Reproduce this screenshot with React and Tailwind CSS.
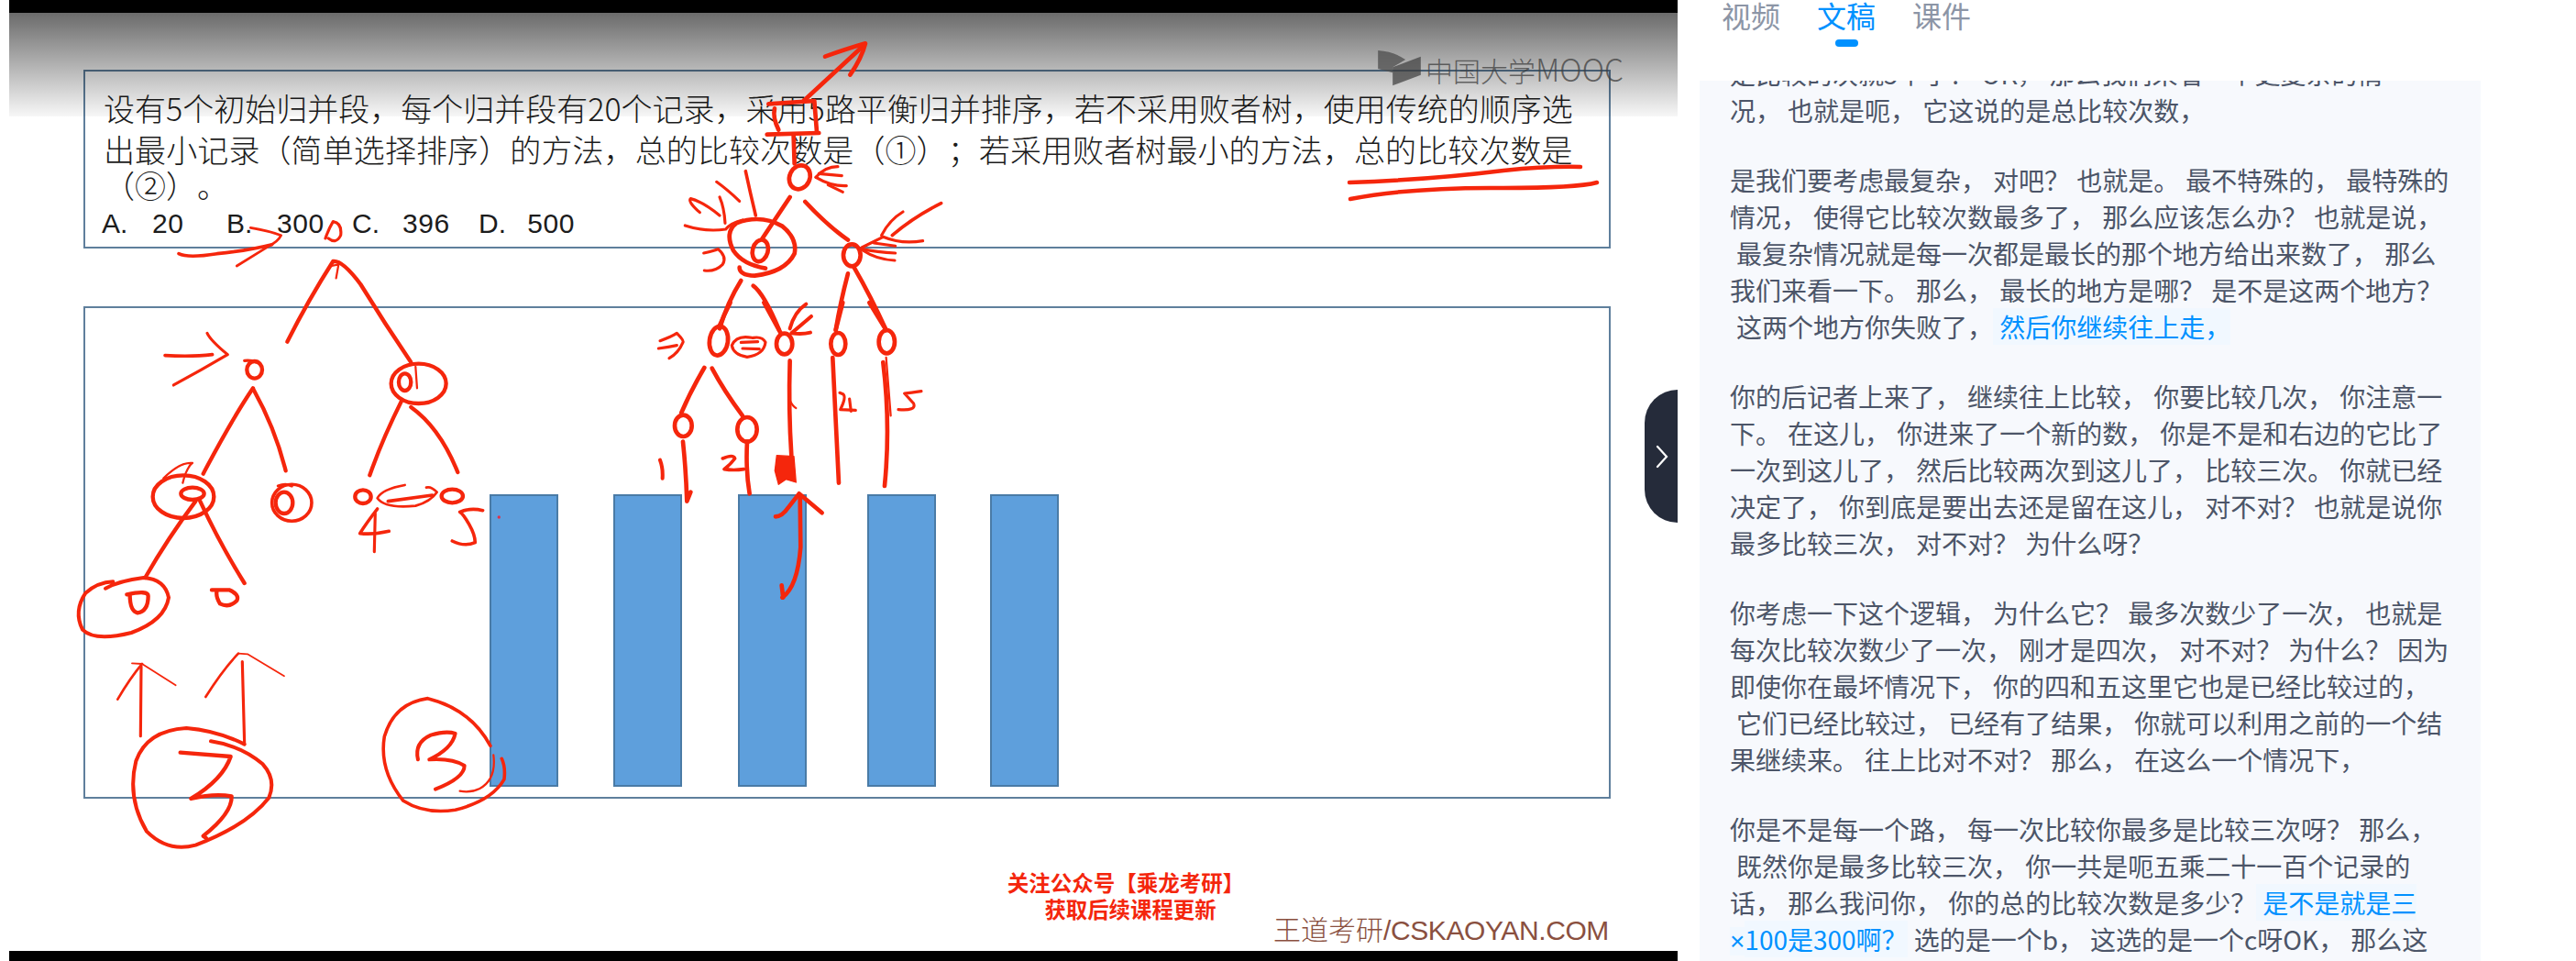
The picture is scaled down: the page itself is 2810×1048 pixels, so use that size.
import React from "react";

const CJK = { fontFamily: '"Noto Sans CJK SC", "Liberation Sans", sans-serif' };

function Ink() {
  const P = ({ d, w }) => <path d={d} strokeWidth={w ? w * 1.35 : undefined} />;
  const E = ({ c, r, a = 0, w }) => (
    <ellipse cx={c[0]} cy={c[1]} rx={r[0]} ry={r[1]} strokeWidth={w ? w * 1.35 : undefined} transform={a ? `rotate(${a} ${c[0]} ${c[1]})` : undefined} />
  );
  return (
    <svg className="absolute top-0 left-0 w-[1830px] h-[1048px]" viewBox="0 0 1830 1048" fill="none" stroke="#f5260c" strokeLinecap="round" strokeLinejoin="round">
      <path d="M1472 199 Q1560 196 1640 186 Q1690 181 1724 182" strokeWidth="4.5" />
      <path d="M1473 217 Q1540 204 1640 205 Q1720 205 1742 199" strokeWidth="4.5" />

      <g transform="translate(690 30) scale(0.3333)" strokeWidth="14">
        <P d="M560 240 L755 60" />
        <P d="M630 95 Q700 70 762 52 Q750 100 712 155" />
        <P d="M445 250 L595 240 L603 340" />
        <P d="M440 350 L610 345" />
        <P d="M465 265 Q458 295 478 335" />
        <P d="M527 355 L530 445" />
        <E c={[547, 490]} r={[33, 40]} a={25} />
        <P d="M600 490 Q630 455 672 455" w="7" />
        <P d="M610 478 L685 485" w="7" />
        <P d="M600 490 Q650 520 700 518" w="7" />
        <P d="M640 515 L688 538" w="7" />
        <P d="M515 555 L425 690" />
        <P d="M565 570 Q640 650 705 695" />
        <P d="M435 788 Q360 775 330 730 Q300 670 340 640 Q420 610 490 650 Q540 690 530 740 Q500 800 400 812 Q350 810 350 785" />
        <E c={[418, 730]} r={[25, 36]} a={15} />
        <P d="M370 470 Q385 540 403 615" w="8" />
        <P d="M275 505 Q310 530 350 568" w="7" />
        <P d="M285 555 Q300 590 303 640" w="7" />
        <P d="M220 605 Q180 570 190 560 Q230 570 285 615" w="7" />
        <P d="M172 648 Q240 670 305 660 Q320 640 360 630" w="7" />
        <P d="M233 738 Q270 730 280 725 Q310 750 295 775 Q270 800 235 795" w="7" />
        <E c={[718, 745]} r={[28, 36]} />
        <P d="M1010 575 Q920 620 850 680" w="8" />
        <P d="M885 603 Q840 630 815 680" w="7" />
        <P d="M750 720 L820 685 Q880 710 950 698" w="7" />
        <P d="M790 705 L860 715" w="7" />
        <P d="M750 725 Q800 735 860 738" w="7" />
        <P d="M755 730 Q800 760 858 762" w="7" />
        <P d="M355 828 Q310 900 285 985" />
        <P d="M395 845 Q430 870 480 990" />
        <P d="M705 805 Q680 900 665 990" />
        <P d="M725 785 Q780 880 830 990" />
      </g>

      <g transform="translate(690 330) scale(0.3333)" strokeWidth="14">
        <P d="M320 0 Q300 40 285 75" />
        <P d="M430 0 L485 100" />
        <P d="M688 0 L665 90" />
        <P d="M775 0 L830 90" />
        <E c={[282, 125]} r={[30, 48]} a={8} />
        <E c={[497, 135]} r={[26, 34]} />
        <E c={[673, 135]} r={[24, 36]} />
        <E c={[832, 128]} r={[26, 38]} />
        <P d="M568 5 Q530 30 515 85" w="9" />
        <P d="M585 45 Q550 75 520 100 Q555 105 582 98" w="9" />
        <P d="M90 125 Q130 110 145 100 Q170 125 165 130 Q150 165 120 182" w="7" />
        <P d="M85 150 Q120 145 145 140" w="7" />
        <P d="M390 115 Q340 105 325 140 Q330 170 375 178 Q430 170 435 130 Q425 110 395 115" w="7" />
        <P d="M355 130 L410 128" w="7" />
        <P d="M360 150 L415 152" w="7" />
        <P d="M235 213 Q190 290 160 360" />
        <P d="M260 215 Q300 290 360 370" />
        <E c={[166, 403]} r={[28, 35]} />
        <E c={[375, 415]} r={[32, 40]} />
        <P d="M165 455 Q175 550 178 650 L190 620" />
        <P d="M375 455 Q370 550 383 625" />
        <P d="M515 190 Q510 350 520 500" />
        <P d="M515 320 Q525 340 535 345" w="5" />
        <P d="M655 180 Q665 400 675 590" />
        <P d="M820 195 Q845 400 825 600" />
        <P d="M830 180 L845 370" w="5" />
        <P d="M90 515 Q100 540 98 575" w="9" />
        <P d="M295 510 Q330 495 335 510 Q320 530 300 545 Q330 550 365 545" w="8" />
        <path d="M472 500 L528 503 L535 588 L502 578 L478 595 L466 550 Z" fill="#f5260c" strokeWidth="4" />
        <P d="M678 295 L690 300 Q700 310 680 350 L730 352" w="7" />
        <P d="M710 315 L715 355" w="7" />
        <P d="M945 290 Q910 295 890 297 L920 330 Q930 355 870 350" w="7" />
        <P d="M490 965 Q540 930 550 800 L548 630" />
        <P d="M488 925 L493 965" />
        <P d="M468 700 Q490 700 510 670 L545 625 L620 688" />
      </g>

      <g transform="translate(160 240) scale(0.3333)" strokeWidth="13">
        <P d="M105 110 Q135 125 230 110 Q330 100 410 80" w="8" />
        <P d="M340 25 Q400 35 440 50 Q430 70 400 85 L295 150" w="6" />
        <P d="M585 60 Q595 30 610 5 Q640 10 635 50 Q620 80 595 60" w="7" />
        <P d="M460 398 Q530 260 610 135 Q640 130 700 210 Q780 340 865 465" />
        <P d="M605 150 L628 145 L620 190" w="5" />
        <P d="M60 443 Q150 448 215 440" w="8" />
        <P d="M198 370 Q210 395 265 440 Q180 490 88 540" w="7" />
        <E c={[353, 490]} r={[25, 28]} />
        <P d="M320 460 Q345 458 360 465" w="7" />
        <P d="M348 550 Q280 650 185 830" />
        <P d="M350 555 Q420 680 455 820" />
        <E c={[890, 535]} r={[90, 65]} />
        <E c={[845, 530]} r={[20, 28]} />
        <P d="M880 480 L885 550" w="5" />
        <P d="M835 590 Q770 720 730 835" />
        <P d="M865 612 Q960 680 1018 825" />
        <E c={[120, 905]} r={[100, 70]} />
        <P d="M55 845 Q110 790 150 795 Q130 810 118 860" w="5" />
        <E c={[150, 895]} r={[38, 20]} />
        <E c={[475, 925]} r={[65, 60]} w="8" />
        <E c={[450, 925]} r={[28, 35]} />
        <P d="M430 870 Q455 860 475 870" w="7" />
        <E c={[708, 905]} r={[26, 22]} />
        <P d="M845 867 Q770 880 755 910 Q780 945 880 935 Q930 920 950 890 Q930 870 915 875" w="6" />
        <P d="M790 920 L935 900" w="8" />
        <E c={[1000, 903]} r={[35, 22]} />
      </g>

      <g transform="translate(70 540) scale(0.3333)" strokeWidth="13">
        <P d="M430 20 Q340 140 265 270" />
        <P d="M445 20 Q510 160 590 288" />
        <P d="M1025 45 Q990 90 968 125 Q1010 130 1063 118" w="8" />
        <P d="M1018 60 L1015 185" w="7" />
        <P d="M1370 50 Q1330 40 1295 55 Q1305 60 1325 95 Q1345 130 1345 155 Q1310 170 1270 150" w="8" />
        <circle cx="1423" cy="72" r="5" fill="#e0304a" stroke="none" />
        <P d="M135 305 Q180 280 260 270 Q330 275 342 335 Q330 410 220 450 Q100 480 60 440 Q30 380 70 320 Q110 285 160 283" w="9" />
        <P d="M205 325 Q275 310 275 330 Q275 380 240 385 Q215 380 215 325" />
        <P d="M483 310 L540 310 Q575 325 565 345 Q540 370 510 355 Q495 330 500 312" />
        <P d="M250 788 L252 560" w="7" />
        <P d="M175 668 Q215 600 255 552" w="6" />
        <P d="M222 550 L255 552 L365 622" w="4" />
        <P d="M590 810 L583 545" w="7" />
        <P d="M463 660 Q520 570 570 518" w="6" />
        <P d="M570 518 L600 520 L720 592" w="4" />
        <P d="M590 815 Q500 770 400 762 Q270 770 235 870 Q205 990 270 1100 Q340 1170 430 1145 Q600 1080 670 990 Q695 930 650 880 Q580 820 480 805" w="9" />
        <P d="M380 842 Q480 850 545 855 Q520 930 415 993 Q490 975 548 985 Q550 1040 455 1115 L465 1122" />
        <P d="M1395 820 Q1330 700 1190 665 Q1080 680 1048 790 Q1030 900 1110 1000 Q1180 1045 1280 1030 Q1400 1000 1440 930 Q1445 890 1432 862" w="8" />
        <P d="M1405 850 Q1415 930 1360 960 Q1330 975 1295 968" w="5" />
        <P d="M1158 865 Q1145 810 1200 785 Q1250 770 1280 780 Q1270 830 1195 865 Q1270 860 1310 885 Q1310 925 1215 962" w="9" />
      </g>
    </svg>
  );
}

function Logo() {
  return (
    <div className="absolute left-[1503px] top-[44px] flex items-center h-[60px]">
      <svg className="w-[47px] h-[39px] shrink-0" viewBox="40 55 140 117">
        <path d="M40 55 Q90 58 130 85 L88 110 L88 128 L40 115 Z" fill="#4c4c4c" fillOpacity="0.75" />
        <path d="M88 110 L180 75 L180 135 L88 170 Z" fill="#3c3c3c" fillOpacity="0.7" />
      </svg>
      <span className="ml-[5px] mt-[2px] text-[30px] leading-[36px] font-light text-[#3f3f3f]/75 whitespace-pre" style={CJK}>
        中国大学<span className="text-[33.5px]">MOOC</span>
      </span>
    </div>
  );
}

function Slide() {
  const line = "h-[44px] leading-[44px] text-[34px] whitespace-pre font-light text-[#1c1c1c] [text-spacing-trim:space-all]";
  const opts = [["A.", "20", "w-[136px]"], ["B.", "300", "w-[137px]"], ["C.", "396", "w-[138px]"], ["D.", "500", "w-[105px]"]];
  return (
    <div className="flex flex-col flex-1 relative bg-white" style={CJK}>
      <div className="ml-[81px] mt-[62px] w-[1666px] h-[195px] border-2 border-[#5f7f9c] pl-[20px] pt-[18px] flex flex-col">
        <div className={line}>设有5个初始归并段，每个归并段有20个记录，采用5路平衡归并排序，若不采用败者树，使用传统的顺序选</div>
        <div className={`${line} mt-[1px] tracking-[0.1px]`}>出最小记录（简单选择排序）的方法，总的比较次数是（①）；若采用败者树最小的方法，总的比较次数是</div>
        <div className={`${line} !h-[34px] !leading-[34px]`}>（②）。</div>
        <div className="flex mt-[2px] h-[44px] items-center -ml-[2px] text-[30px] text-[#1c1c1c]" style={{ fontFamily: '"Liberation Sans", sans-serif' }}>
          {opts.map(([a, b, w]) => (
            <div key={a} className={`flex ${w}`}>
              <span className="w-[55px]">{a}</span>
              <span className="tracking-[0.6px]">{b}</span>
            </div>
          ))}
        </div>
      </div>

      <div className="ml-[81px] mt-[63px] w-[1666px] h-[537px] border-2 border-[#5f7f9c] pt-[203px] pl-[441px] flex">
        <div className="w-[75px] h-[319px] bg-[#5e9fdc] border-2 border-[#4a7ba6]" />
        <div className="ml-[60px] w-[75px] h-[319px] bg-[#5e9fdc] border-2 border-[#4a7ba6]" />
        <div className="ml-[61px] w-[75px] h-[319px] bg-[#5e9fdc] border-2 border-[#4a7ba6]" />
        <div className="ml-[66px] w-[75px] h-[319px] bg-[#5e9fdc] border-2 border-[#4a7ba6]" />
        <div className="ml-[59px] w-[75px] h-[319px] bg-[#5e9fdc] border-2 border-[#4a7ba6]" />
      </div>

      <div className="flex items-start mt-[77px] ml-[1093px]">
        <div className="w-[250px] flex flex-col items-center text-[#f4260c] font-bold text-[23.5px] leading-[29px] whitespace-pre [text-spacing-trim:space-all]">
          <div>关注公众号【乘龙考研】</div>
          <div className="text-[23.4px] ml-[10px]">获取后续课程更新</div>
        </div>
        <div className="ml-[36px] mt-[48px] text-[30px] leading-[32px] whitespace-pre text-[#8a5040] font-light">
          王道考研<span style={{ fontFamily: '"Liberation Sans", sans-serif' }} className="tracking-[-0.4px]">/CSKAOYAN.COM</span>
        </div>
      </div>

      <div className="absolute top-0 left-0 right-0 h-[113px] bg-linear-to-b from-[#00000094] to-[#00000008]" />
    </div>
  );
}

function Transcript() {
  const paras = [
    [["是比较的次就5个了？ OK， 那么我们来看一个更复杂的情"], ["况， 也就是呃， 它这说的是总比较次数，"]],
    [
      ["是我们要考虑最复杂， 对吧？ 也就是。 最不特殊的， 最特殊的"],
      ["情况， 使得它比较次数最多了， 那么应该怎么办？ 也就是说，"],
      [" 最复杂情况就是每一次都是最长的那个地方给出来数了， 那么"],
      ["我们来看一下。 那么， 最长的地方是哪？ 是不是这两个地方？"],
      [" 这两个地方你失败了，", " 然后你继续往上走，"],
    ],
    [
      ["你的后记者上来了， 继续往上比较， 你要比较几次， 你注意一"],
      ["下。 在这儿， 你进来了一个新的数， 你是不是和右边的它比了"],
      ["一次到这儿了， 然后比较两次到这儿了， 比较三次。 你就已经"],
      ["决定了， 你到底是要出去还是留在这儿， 对不对？ 也就是说你"],
      ["最多比较三次， 对不对？ 为什么呀？"],
    ],
    [
      ["你考虑一下这个逻辑， 为什么它？ 最多次数少了一次， 也就是"],
      ["每次比较次数少了一次， 刚才是四次， 对不对？ 为什么？ 因为"],
      ["即使你在最坏情况下， 你的四和五这里它也是已经比较过的，"],
      [" 它们已经比较过， 已经有了结果， 你就可以利用之前的一个结"],
      ["果继续来。 往上比对不对？ 那么， 在这么一个情况下，"],
    ],
    [
      ["你是不是每一个路， 每一次比较你最多是比较三次呀？ 那么，"],
      [" 既然你是最多比较三次， 你一共是呃五乘二十一百个记录的"],
      ["话， 那么我问你， 你的总的比较次数是多少？", " 是不是就是三"],
      ["", "100是300啊？", " 选的是一个b， 这选的是一个c呀OK， 那么这", "×"],
    ],
  ];
  return (
    <div className="ml-[24px] w-[852px] flex-1 bg-[#f7f9fd] overflow-hidden pl-[33px]">
      <div className="-mt-[28px] flex flex-col gap-[36px] text-[28px] leading-[40px] text-[#4c5568] whitespace-pre [word-spacing:0.8px] [text-spacing-trim:space-all]" style={CJK}>
        {paras.map((p, i) => (
          <div key={i}>
            {p.map((l, j) => (
              <div key={j} className="h-[40px]">
                {l[0]}
                {l[3] ? <span className="text-[#0091ff] bg-[#f1f8ff]" style={{ fontFamily: '"Liberation Sans", sans-serif' }}>{l[3]}</span> : null}
                {l[1] ? <span className="text-[#0091ff] bg-[#f1f8ff]">{l[1]}</span> : null}
                {l[2] || null}
              </div>
            ))}
          </div>
        ))}
      </div>
    </div>
  );
}

export default function App() {
  return (
    <div className="relative flex w-[2810px] h-[1048px] overflow-hidden bg-white">
      <div className="relative ml-[10px] w-[1820px] h-full flex flex-col bg-white">
        <div className="h-[14px] bg-black" />
        <Slide />
        <div className="h-[11px] bg-black" />
        <div className="absolute right-0 top-[425px] w-[36px] h-[145px] rounded-l-[36px] bg-[#252b3a] flex items-center justify-end pr-[10px]">
          <svg className="w-[14px] h-[26px]" viewBox="0 0 14 26" fill="none" stroke="#ffffff" strokeWidth="2.2" strokeLinecap="round">
            <path d="M2 2 L12 13 L2 24" />
          </svg>
        </div>
      </div>
      <div className="flex-1 flex flex-col h-full bg-white">
        <div className="h-[88px] flex pl-[48px] gap-[40px] text-[32px] leading-[32px] shrink-0" style={CJK}>
          <div className="text-[#8c95a6]">视频</div>
          <div className="flex flex-col items-center text-[#0091ff]">
            文稿
            <div className="mt-[11px] w-[25px] h-[8px] rounded-full bg-[#0091ff]" />
          </div>
          <div className="text-[#8c95a6]">课件</div>
        </div>
        <Transcript />
      </div>
      <Logo />
      <Ink />
    </div>
  );
}
